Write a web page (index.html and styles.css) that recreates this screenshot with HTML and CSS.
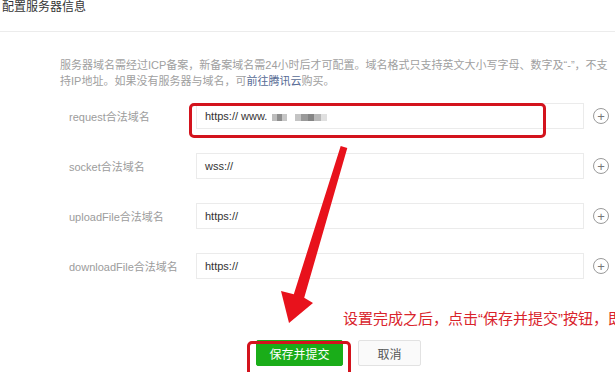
FILE: index.html
```html
<!DOCTYPE html>
<html lang="zh-CN">
<head>
  <meta charset="UTF-8">
  <title>配置服务器信息</title>
  <link rel="stylesheet" href="styles.css">
</head>
<body>
  <div class="page">
    <div class="header">
      <h2>配置服务器信息</h2>
    </div>

    <p class="tips">服务器域名需经过ICP备案，新备案域名需24小时后才可配置。域名格式只支持英文大小写字母、数字及“-”，不支持IP地址。如果没有服务器与域名，可<a href="#">前往腾讯云</a>购买。</p>

    <!-- 域名表单 -->
    <div class="form">
      <div class="row">
        <label>request合法域名</label>
        <div class="input">https:// www.<span class="mosaic m1"></span><span class="mosaic m2"></span></div>
        <span class="add">+</span>
      </div>
      <div class="row">
        <label>socket合法域名</label>
        <div class="input">wss://</div>
        <span class="add">+</span>
      </div>
      <div class="row">
        <label>uploadFile合法域名</label>
        <div class="input">https://</div>
        <span class="add">+</span>
      </div>
      <div class="row">
        <label>downloadFile合法域名</label>
        <div class="input">https://</div>
        <span class="add">+</span>
      </div>
    </div>

    <div class="actions">
      <button class="btn primary">保存并提交</button>
      <button class="btn">取消</button>
    </div>

    <!-- 标注 -->
    <div class="mark mark-input"></div>
    <div class="mark mark-btn"></div>
    <div class="note">设置完成之后，点击“保存并提交”按钮，即</div>
    <svg class="arrow" width="615" height="372" viewBox="0 0 615 372">
      <polygon points="340.7,145.9 347.3,148.1 304.2,297.8 313,303 289,323 281,291 293.8,294.2" fill="#e8121c"/>
    </svg>
  </div>
</body>
</html>
```

FILE: styles.css
```css
html, body {
  margin: 0;
  padding: 0;
  background: #fff;
  overflow: hidden;
}
.page {
  position: relative;
  width: 615px;
  height: 372px;
  font-family: "Liberation Sans", "Noto Sans CJK SC", sans-serif;
  color: #353535;
}
.header {
  height: 31px;
  border-bottom: 1px solid #ececec;
}
.header h2 {
  margin: 0;
  padding-left: 2px;
  font-size: 12px;
  line-height: 14px;
  font-weight: normal;
  color: #353535;
}
.tips {
  margin: 25px 0 0;
  padding-left: 60px;
  width: 552px;
  font-size: 11px;
  line-height: 16px;
  color: #a0a0a0;
}
.tips a {
  color: #576b95;
  text-decoration: none;
}
.form {
  margin-top: 14px;
  display: flex;
  flex-direction: column;
  gap: 24px;
}
.row {
  display: flex;
  align-items: center;
  height: 26px;
}
.row label {
  width: 196px;
  flex: none;
  padding-left: 69px;
  box-sizing: border-box;
  font-size: 11px;
  color: #9c9c9c;
  white-space: nowrap;
}
.input {
  width: 388px;
  height: 26px;
  box-sizing: border-box;
  border: 1px solid #ebebeb;
  padding: 0 8px;
  display: flex;
  align-items: center;
  font-size: 11px;
  color: #333;
  white-space: pre;
}
.mosaic {
  display: inline-block;
  height: 7px;
  margin-top: 3px;
}
.m1 {
  width: 15px;
  margin-left: 5px;
  background: linear-gradient(90deg, #bdbdbd 0 33%, #8e8e8e 33% 66%, #c6c6c6 66%);
}
.m2 {
  width: 32px;
  margin-left: 8px;
  background: linear-gradient(90deg, #c4c4c4 0 20%, #9a9a9a 20% 40%, #858585 40% 60%, #b8b8b8 60% 80%, #e0e0e0 80%);
}
.add {
  margin-left: 9px;
  width: 16px;
  height: 16px;
  box-sizing: border-box;
  border: 1px solid #9a9a9a;
  border-radius: 50%;
  display: flex;
  align-items: center;
  justify-content: center;
  font-size: 13px;
  line-height: 1;
  color: #777;
}
.actions {
  margin-top: 61px;
  padding-left: 256px;
  display: flex;
  gap: 15px;
}
.btn {
  height: 26px;
  width: 63px;
  border: 1px solid #e2e2e2;
  background: #fafafa;
  border-radius: 2px;
  font-family: inherit;
  font-size: 12px;
  color: #555;
  padding: 0;
}
.btn.primary {
  width: 87px;
  background: #1aad19;
  border-color: #1aad19;
  color: #fff;
}
.mark {
  position: absolute;
  border: 3px solid #d3131d;
  border-radius: 5px;
  box-sizing: border-box;
}
.mark-input {
  left: 189px;
  top: 103px;
  width: 357px;
  height: 35px;
}
.mark-btn {
  left: 247px;
  top: 341px;
  width: 104px;
  height: 40px;
}
.note {
  position: absolute;
  left: 343px;
  top: 310px;
  font-size: 15px;
  line-height: 18px;
  color: #d9242c;
  white-space: nowrap;
}
.arrow {
  position: absolute;
  left: 0;
  top: 0;
  pointer-events: none;
}
```
